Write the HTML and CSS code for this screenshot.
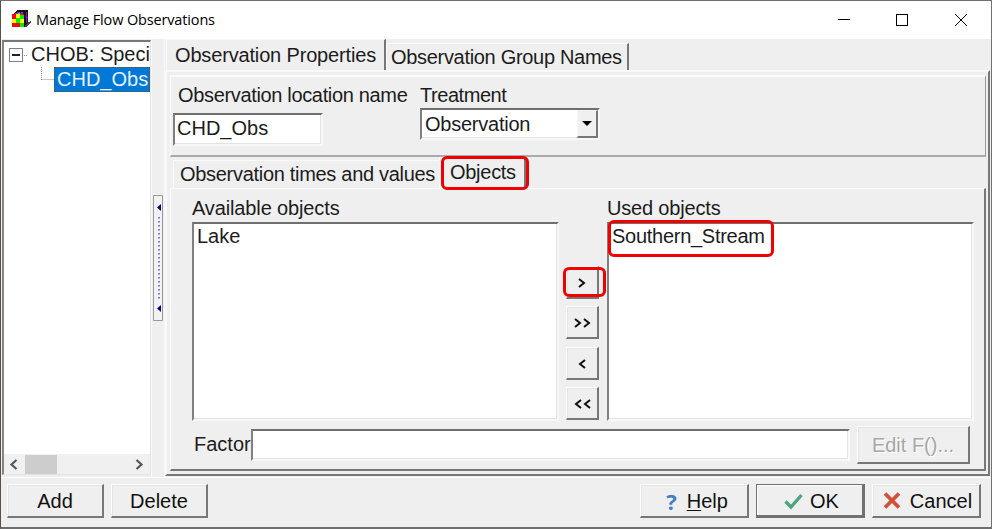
FILE: index.html
```html
<!DOCTYPE html>
<html lang="en">
<head>
<meta charset="utf-8">
<title>Manage Flow Observations</title>
<link rel="stylesheet" href="styles.css">
</head>
<body>
<div class="window">
  <header class="titlebar">
    <svg class="app-icon" width="20" height="20" viewBox="0 0 20 20" shape-rendering="crispEdges">
      <path d="M1 4L5 0H16V15L12 17H1Z" fill="#111"/>
      <path d="M3 3h2v-1h3v1h-2v1H3zM9 2h2v2H8z" fill="#a020d0"/><path d="M6 3h2v1H6z" fill="#0cc"/>
      <path d="M14 2h1v11h-1z" fill="#b0a"/><path d="M13 5h1v3h-1zM15 6h1v3h-1z" fill="#20d"/>
      <path d="M0 4h12v13H0z" fill="#f00"/>
      <path d="M4 4h4v4H4zM8 9h4v4H8zM0 9h4v4H0z" fill="#ff0"/>
      <path d="M8 5h4v4H8zM4 8h4v5H4zM8 13h4v4H8z" fill="#0e0"/>
      <path d="M13 15l4-3 2-2v2l-4 5h-2z" fill="#444"/>
    </svg>
    <h1 class="title">Manage Flow Observations</h1>
    <svg class="controls" width="132" height="14" viewBox="0 0 132 14" fill="none" stroke="#000" shape-rendering="crispEdges">
      <path d="M0 6.500H12M58.500 1.500h11v11h-11z"/><path d="M117 1L129 13M129 1L117 13" shape-rendering="auto"/>
    </svg>
  </header>

  <main class="content">
    <aside class="tree">
      <div class="nodes">
        <div class="node">
          <svg width="18" height="25" viewBox="0 0 18 25" fill="none" shape-rendering="crispEdges"><path d="M.5 6.500h13v13H.5z" stroke="#808080"/><path d="M3 13h8" stroke="#222" stroke-width="2"/><path d="M15 13.500h3" stroke="#999" stroke-dasharray="1 1"/></svg>
          <span class="t-root">CHOB: Speci</span>
        </div>
        <div class="node child">
          <svg width="13" height="25" viewBox="0 0 13 25" fill="none" stroke="#888" stroke-dasharray="1 1"><path d="M.5 0v13M.5 12.500H13"/></svg>
          <span class="selected">CHD_Obs</span>
        </div>
      </div>
      <div class="scrollbar">
        <svg width="9" height="11" viewBox="0 0 9 11"><path d="M7.500 1L2.500 5.500 7.500 10" fill="none" stroke="#555" stroke-width="2.200"/></svg>
        <i class="thumb"></i>
        <svg width="9" height="11" viewBox="0 0 9 11"><path d="M1.500 1L6.500 5.500 1.500 10" fill="none" stroke="#555" stroke-width="2.200"/></svg>
      </div>
    </aside>

    <div class="splitter">
      <svg class="grip" width="10" height="126" viewBox="0 0 10 126"><path d="M.5.5h9v125h-9z" fill="#f2f2f2" stroke="#999"/><path d="M8 9v7L4 12.500zM8 110v7L4 113.500z" fill="#000090"/><path d="M6 22V106" stroke="#7777c8" stroke-width="2" stroke-dasharray="1.500 2.500"/></svg>
    </div>

    <section class="pages">
      <nav class="tabs outer-tabs">
        <span class="tab active t-prop">Observation Properties</span>
        <span class="tab last t-group">Observation Group Names</span>
      </nav>
      <div class="page">
        <div class="fields">
          <div class="field name">
            <label class="t-name">Observation location name</label>
            <div class="sunken input">CHD_Obs</div>
          </div>
          <div class="field treatment">
            <label class="t-treat">Treatment</label>
            <div class="sunken combo"><span class="t-obs">Observation</span><span class="drop"><svg width="10" height="5" viewBox="0 0 10 5"><path d="M0 0h10L5 5z"/></svg></span></div>
          </div>
        </div>
        <nav class="tabs inner-tabs">
          <span class="tab t-times">Observation times and values</span>
          <span class="tab active t-objects">Objects<i class="mark mark-tab"></i></span>
        </nav>
        <div class="objects">
          <div class="lists">
            <div class="list-col available">
              <label class="t-avail">Available objects</label>
              <div class="sunken list"><span>Lake</span></div>
            </div>
            <div class="movers">
              <span class="button"><svg width="8" height="10"><path d="M1 1L6 5 1 9"/></svg><i class="mark mark-move"></i></span>
              <span class="button"><svg width="17" height="10"><path d="M1 1L6 5 1 9M10 1l5 4-5 4"/></svg></span>
              <span class="button"><svg width="8" height="10"><path d="M7 1L2 5l5 4"/></svg></span>
              <span class="button"><svg width="17" height="10"><path d="M7 1L2 5l5 4M16 1l-5 4 5 4"/></svg></span>
            </div>
            <div class="list-col used">
              <label class="t-used">Used objects</label>
              <div class="sunken list"><span class="t-south">Southern_Stream</span><i class="mark mark-item"></i></div>
            </div>
          </div>
          <div class="factor">
            <label class="t-factor">Factor</label>
            <div class="sunken factor-input"></div>
            <span class="button edit"><span>Edit F()...</span></span>
          </div>
        </div>
      </div>
    </section>
  </main>

  <footer class="footer">
    <span class="button add"><span>Add</span></span>
    <span class="button delete"><span class="t-delete">Delete</span></span>
    <span class="button help"><b class="question">?</b><span class="t-help"><u>H</u>elp</span></span>
    <span class="button ok"><svg width="19" height="17" viewBox="0 0 19 17"><path d="M1.500 8.500L7 14 17.500 2" fill="none" stroke="#4da583" stroke-width="3.400"/></svg><span class="t-ok">OK</span></span>
    <span class="button cancel"><svg width="18" height="17" viewBox="0 0 18 17"><path d="M2 1.500L16 15.500M16 1.500L2 15.500" stroke="#d2513a" stroke-width="3.800"/></svg><span class="t-cancel">Cancel</span></span>
  </footer>
</div>
</body>
</html>
```
FILE: styles.css
```css
* { box-sizing: border-box; }
body {
  margin: 0;
  font: 20px/24px "Liberation Sans", Arial, sans-serif;
  color: #1c1c1c;
  overflow: hidden;
}
.window {
  width: 992px;
  height: 529px;
  display: grid;
  grid-template-rows: 38px 439px 1fr;
  background: #efefef;
  border: 1px solid #707070;
  border-left-color: #59504c;
  border-bottom: 2px solid #6e6e6e;
}
.titlebar { display: flex; align-items: center; background: #fff; padding-left: 11px; }
.title {
  margin: 0 0 0 4px;
  font: 400 14.5px/20px "Open Sans", "Noto Sans", sans-serif;
  white-space: nowrap;
  color: #000;
  letter-spacing: -.15px;
}
.controls { margin-left: auto; margin-right: 21px; }
.content { display: flex; border-bottom: 1px solid #fff; min-width: 0; }

.sunken {
  background: #fff;
  border: 2px solid;
  border-color: #6f6f6f #f8f8f8 #f8f8f8 #808080;
  box-shadow: inset -1px -1px #e3e3e3;
}
.tree {
  display: flex;
  flex-direction: column;
  width: 149px;
  height: 435px;
  margin: 1px 0 0 1px;
  background: #fff;
  border: 1px solid #e3e3e3;
  border-top: 2px solid #777;
  border-left: 2px solid #858585;
  overflow: hidden;
}
.nodes { flex: 1; overflow: hidden; }
.node { display: flex; height: 25px; margin-left: 5px; white-space: nowrap; }
.node svg { flex: none; }
.node span { margin: 0 0 0 4px; }
.node.child { margin-left: 37px; }
.node .selected {
  width: 96px;
  height: 25px;
  margin: 0;
  padding: 0 0 0 3px;
  color: #e5f2ff;
  background: #0078d7;
  outline: 1px dotted #714b2a;
  outline-offset: -1px;
  overflow: hidden;
}
.scrollbar { display: flex; align-items: center; height: 20px; background: #f0f0f0; padding: 0 6px 0 5px; }
.thumb { width: 32px; height: 19px; margin: 0 auto 0 7px; background: #cdcdcd; }
.splitter { width: 14px; padding: 156px 0 0 1px; border-left: 1px solid #fafafa; border-right: 1px solid #f7f7f7; }
.splitter svg { display: block; }

.pages { width: 825px; display: flex; flex-direction: column; }
.tabs { display: flex; align-items: flex-end; flex: none; }
.tab {
  display: block;
  height: 27px;
  padding: 1px 0 0 4px;
  border-top: 1px solid #fafafa;
  border-left: 1px solid #fafafa;
  white-space: nowrap;
}
.tab.active { height: 31px; padding: 3px 0 0 8px; border-right: 2px solid #777; position: relative; }
.outer-tabs { height: 31px; padding-left: 1px; }
.outer-tabs .t-prop { width: 220px; }
.outer-tabs .t-group { width: 243px; border-right: 2px solid #777; }
.page {
  height: 406px;
  padding: 3px 2px 3px 3px;
  border: 2px solid;
  border-color: #f9f9f9 #777 #777 #f9f9f9;
}
.fields {
  display: flex;
  height: 82px;
  padding: 4px 0 0 2px;
  border: 1px solid #fafafa;
  border-top-width: 2px;
  border-bottom: 2px solid #aaa;
  border-right: 1px solid #999;
}
.field label { display: block; white-space: nowrap; }
.field.name { width: 247px; }
.field.name label { margin: 2px 0 6px 5px; }
.input { width: 150px; height: 33px; padding: 1px 0 0 2px; }
.treatment label { margin: 2px 0 1px; }
.combo { display: flex; justify-content: space-between; width: 180px; height: 32px; padding: 2px 0 0 3px; }
.combo .drop {
  display: flex;
  align-items: center;
  justify-content: center;
  width: 21px;
  height: 28px;
  margin-top: -2px;
  background: #f0f0f0;
  border: 1px solid #f5f5f5;
  border-right: 2px solid #777;
  border-bottom: 2px solid #777;
}
.inner-tabs { height: 31px; padding-left: 3px; }
.inner-tabs .t-times { width: 266px; height: 28px; padding: 1px 0 0 6px; }
.inner-tabs .t-objects { width: 87px; height: 31px; padding: 2px 0 0 10px; }
.objects {
  height: 283px;
  padding: 7px 0 0 21px;
  border: 1px solid #fafafa;
  border-right: 2px solid #777;
  border-bottom: 2px solid #777;
}
.lists { display: flex; }
.list-col label { display: block; margin-bottom: 2px; white-space: nowrap; }
.list { height: 199px; padding: 1px 0 0 3px; position: relative; line-height: 23px; }
.available { width: 367px; }
.used { width: 367px; margin-left: 8px; }
.movers { display: grid; grid-template-rows: repeat(4, 33px); row-gap: 7.300px; padding: 70px 0 0 7px; }
.button {
  display: flex;
  align-items: center;
  justify-content: center;
  position: relative;
  background: #efefef;
  border: 1px solid #fdfdfd;
  border-right: 2px solid #777;
  border-bottom: 2px solid #777;
  box-shadow: inset 1px 1px #e5e5e5;
  white-space: nowrap;
}
.movers .button { width: 33px; }
.movers .button > svg { fill: none; stroke: #111; stroke-width: 2; position: relative; top: 1px; }
.mark { position: absolute; border: 3px solid #f10000; border-radius: 6px; }
.mark-tab { left: 1px; top: -2px; width: 88px; height: 34px; }
.mark-move { left: -4px; top: 0; width: 43px; height: 30px; }
.mark-item { left: -1px; top: -4px; width: 166px; height: 37px; }
.factor { display: flex; padding: 5px 0 0 1px; }
.factor label { width: 58px; padding: 6px 0 0 1px; }
.factor-input { width: 599px; height: 32px; margin-top: 3px; }
.edit { width: 113px; height: 38px; margin-left: 7px; color: #a7a7a7; text-shadow: 1px 1px #fff; }

.footer { display: flex; padding: 6px 10px 0 6px; }
.footer .button { height: 34px; color: #111; }
.add { width: 97px; }
.delete { width: 97px; margin-left: 7px; }
.help { width: 109px; margin-left: auto; }
.ok { width: 109px; margin-left: 7px; }
.footer .ok { border: 1px solid #707070; border-right-width: 3px; border-bottom-width: 3px; box-shadow: inset 1px 1px #fff; }
.ok span, .ok svg { position: relative; top: 1px; }
.cancel { width: 109px; margin-left: 7px; }
.question { color: #427fbe; font: 700 22px/24px "Open Sans", sans-serif; margin: 0 10px 0 6px; }
.ok svg { margin: 0 7px 0 4px; }
.cancel svg { margin: 0 9px 0 3px; }
u { text-underline-offset: 2px; text-decoration-thickness: 1px; }
.t-prop { letter-spacing: -.16px; }
.t-group { letter-spacing: -.31px; }
.t-name { letter-spacing: -.34px; }
.t-treat { letter-spacing: -.45px; }
.t-obs { letter-spacing: -.24px; }
.t-times { letter-spacing: -.3px; }
.t-objects { letter-spacing: -.28px; }
.t-avail { letter-spacing: -.13px; }
.t-used { letter-spacing: -.18px; }
.t-south { letter-spacing: -.27px; }
```
